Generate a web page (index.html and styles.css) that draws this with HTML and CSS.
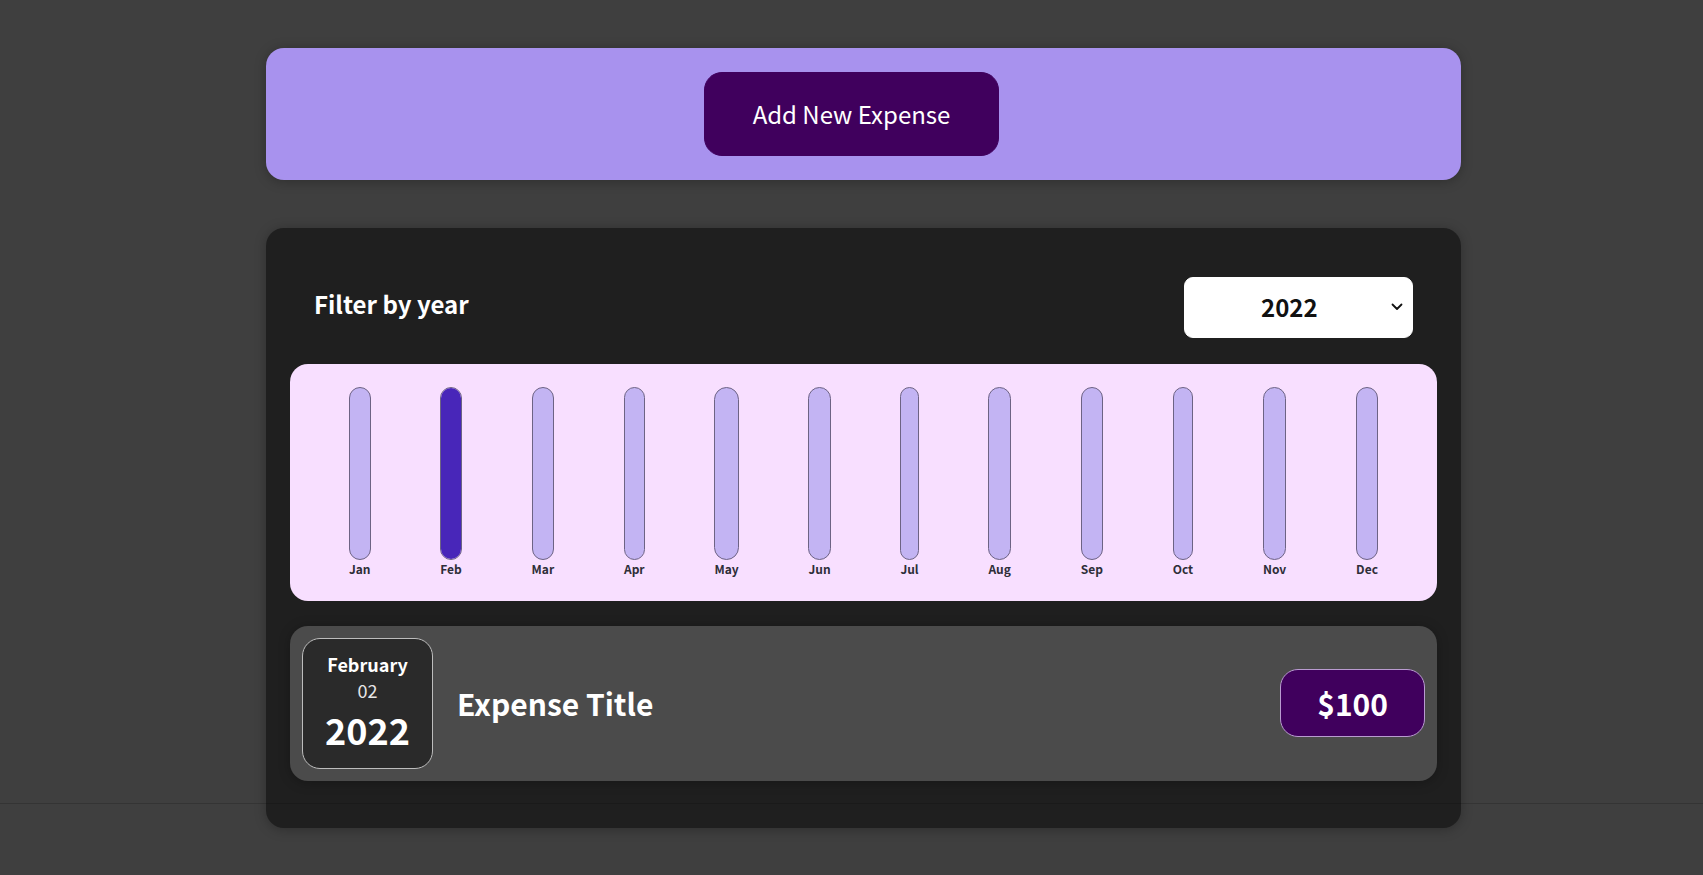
FILE: index.html
```html
<!DOCTYPE html>
<html lang="en">
<head>
<meta charset="utf-8">
<title>Expenses</title>
<link rel="stylesheet" href="styles.css">
</head>
<body>
<div class="page">
  <div class="new-expense card">
    <button class="add-btn" type="button">Add New Expense</button>
  </div>

  <div class="expenses card">
    <div class="filter">
      <div class="filter-control">
        <label class="filter-label">Filter by year</label>
        <div class="select-wrap">
          <select class="year-select">
            <option>2022</option>
            <option>2021</option>
            <option>2020</option>
            <option>2019</option>
          </select>
          <svg class="chev" width="12" height="8" viewBox="0 0 12 8"><path d="M1.5 1.5 L6 6 L10.5 1.5" fill="none" stroke="#111" stroke-width="1.8" stroke-linecap="round" stroke-linejoin="round"/></svg>
        </div>
      </div>
    </div>

    <div class="chart">
      <div class="chart-bar"><div class="bar-inner"><div class="bar-fill" style="height:0%"></div></div><div class="bar-label">Jan</div></div>
      <div class="chart-bar"><div class="bar-inner"><div class="bar-fill" style="height:100%"></div></div><div class="bar-label">Feb</div></div>
      <div class="chart-bar"><div class="bar-inner"><div class="bar-fill" style="height:0%"></div></div><div class="bar-label">Mar</div></div>
      <div class="chart-bar"><div class="bar-inner"><div class="bar-fill" style="height:0%"></div></div><div class="bar-label">Apr</div></div>
      <div class="chart-bar"><div class="bar-inner"><div class="bar-fill" style="height:0%"></div></div><div class="bar-label">May</div></div>
      <div class="chart-bar"><div class="bar-inner"><div class="bar-fill" style="height:0%"></div></div><div class="bar-label">Jun</div></div>
      <div class="chart-bar"><div class="bar-inner"><div class="bar-fill" style="height:0%"></div></div><div class="bar-label">Jul</div></div>
      <div class="chart-bar"><div class="bar-inner"><div class="bar-fill" style="height:0%"></div></div><div class="bar-label">Aug</div></div>
      <div class="chart-bar"><div class="bar-inner"><div class="bar-fill" style="height:0%"></div></div><div class="bar-label">Sep</div></div>
      <div class="chart-bar"><div class="bar-inner"><div class="bar-fill" style="height:0%"></div></div><div class="bar-label">Oct</div></div>
      <div class="chart-bar"><div class="bar-inner"><div class="bar-fill" style="height:0%"></div></div><div class="bar-label">Nov</div></div>
      <div class="chart-bar"><div class="bar-inner"><div class="bar-fill" style="height:0%"></div></div><div class="bar-label">Dec</div></div>
    </div>

    <ul class="expenses-list">
      <li class="expense-item">
        <div class="expense-date">
          <div class="date-month">February</div>
          <div class="date-day">02</div>
          <div class="date-year">2022</div>
        </div>
        <div class="expense-desc">
          <h2 class="expense-title">Expense Title</h2>
          <div class="expense-price">$100</div>
        </div>
      </li>
    </ul>
  </div>

  <div class="guide-line"></div>
</div>
</body>
</html>
```

FILE: styles.css
```css
* {
  box-sizing: border-box;
}

html, body {
  margin: 0;
  padding: 0;
}

body {
  background-color: #3f3f3f;
  font-family: "Noto Sans CJK JP", "Source Sans Pro", "Lato", sans-serif;
  font-size: 24px;
  color: #222;
}

.page {
  position: relative;
  min-height: 875px;
  padding-top: 48px;
  padding-bottom: 48px;
}

.card {
  border-radius: 18px;
  box-shadow: 0 1.5px 12px rgba(0, 0, 0, 0.25);
}

/* New expense */
.new-expense {
  background-color: #a892ee;
  padding: 24px;
  margin-left: 266px;
  width: 1195px;
  text-align: center;
}

.add-btn {
  font: inherit;
  font-size: 24px;
  line-height: 33.75px;
  cursor: pointer;
  padding: 24px 48px;
  border: 1px solid #40005d;
  background-color: #40005d;
  color: #ffffff;
  border-radius: 18px;
  margin-right: 24px;
}

/* Expenses */
.expenses {
  background-color: #1f1f1f;
  padding: 24px;
  margin-top: 48px;
  margin-left: 266px;
  width: 1195px;
}

.filter {
  color: #ffffff;
  padding: 0 24px;
}

.filter-control {
  display: flex;
  width: 100%;
  align-items: center;
  justify-content: space-between;
  margin: 25px 0 26px;
}

.filter-label {
  font-weight: bold;
  font-size: 24px;
  line-height: 34.75px;
  margin-bottom: 6px;
}

.select-wrap {
  position: relative;
  display: flex;
}

.year-select {
  -webkit-appearance: none;
  appearance: none;
  font: inherit;
  font-weight: bold;
  font-size: 24px;
  line-height: 34.75px;
  height: 61px;
  width: 229px;
  padding: 12px 72px 12px 76px;
  border: 1px solid #ffffff;
  border-radius: 9px;
  background-color: #ffffff;
  color: #111;
}

.chev {
  position: absolute;
  right: 10px;
  top: 26px;
  pointer-events: none;
}

/* Chart */
.chart {
  padding: 23px 24px 23px;
  border-radius: 18px;
  background-color: #f8dfff;
  text-align: center;
  display: flex;
  justify-content: space-around;
  height: 237px;
}

.chart-bar {
  height: 100%;
  display: flex;
  flex-direction: column;
  align-items: center;
}

.bar-inner {
  height: 100%;
  width: 100%;
  border: 1.5px solid #6d6384;
  border-radius: 18px;
  background-color: #c3b4f3;
  overflow: hidden;
  display: flex;
  flex-direction: column;
  justify-content: flex-end;
}

.bar-fill {
  background-color: #4826b9;
  width: 100%;
}

.bar-label {
  font-weight: bold;
  font-size: 12px;
  line-height: 17.4px;
  text-align: center;
  color: #2e2e38;
}

/* List */
.expenses-list {
  list-style: none;
  padding: 0;
  margin: 0;
}

.expense-item {
  display: flex;
  justify-content: space-between;
  align-items: center;
  box-shadow: 0 1.5px 12px rgba(0, 0, 0, 0.25);
  padding: 12px;
  margin: 25px 0 23px;
  border-radius: 18px;
  background-color: #4b4b4b;
}

.expense-date {
  display: flex;
  flex-direction: column;
  width: 131px;
  height: 131px;
  border: 1px solid #bdbdbd;
  background-color: #2a2a2a;
  color: #ffffff;
  border-radius: 18px;
  align-items: center;
  justify-content: center;
  flex-shrink: 0;
}

.date-month {
  font-size: 18px;
  line-height: 26px;
  font-weight: bold;
}

.date-day {
  font-size: 18px;
  line-height: 26px;
  color: #e6e6e6;
}

.date-year {
  font-size: 36px;
  line-height: 52px;
  font-weight: bold;
}

.expense-desc {
  display: flex;
  flex-direction: row;
  align-items: center;
  justify-content: flex-start;
  flex: 1;
}

.expense-title {
  font-size: 30px;
  line-height: 43px;
  font-weight: bold;
  flex: 1;
  margin: 0 24px;
  color: #ffffff;
}

.expense-price {
  font-size: 30px;
  line-height: 42px;
  font-weight: bold;
  color: #ffffff;
  background-color: #40005d;
  border: 1px solid #b99bd0;
  padding: 12px 36px;
  border-radius: 18px;
}

/* faint full-width rule drawn over the page */
.guide-line {
  position: absolute;
  left: 0;
  right: 0;
  top: 803px;
  height: 1px;
  background-color: rgba(0, 0, 0, 0.16);
  pointer-events: none;
}
```
